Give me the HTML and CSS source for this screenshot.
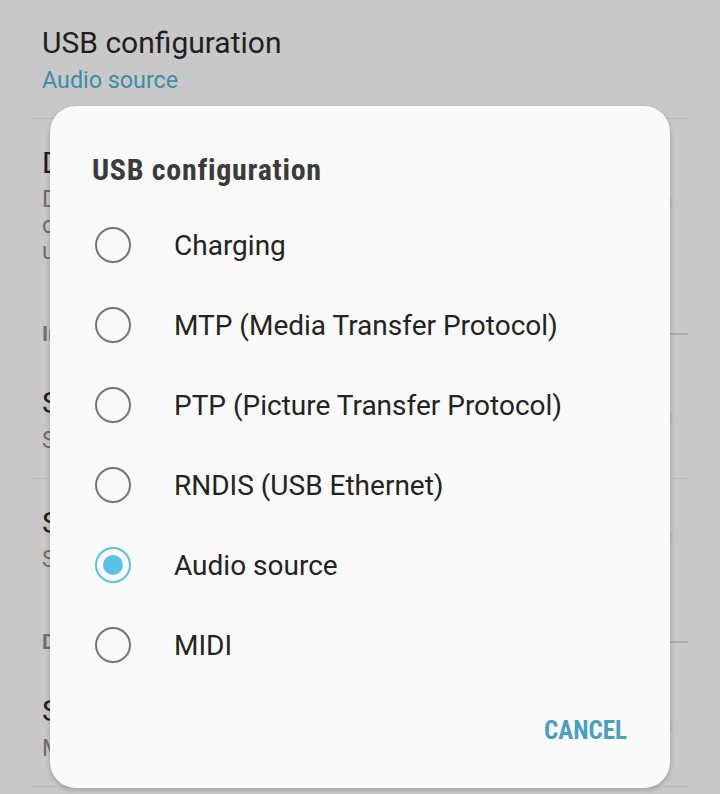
FILE: index.html
```html
<!DOCTYPE html>
<html lang="en">
<head>
    <meta charset="UTF-8">
    <meta name="viewport" content="width=device-width, initial-scale=1.0">
    <title>USB configuration</title>
    <link rel="stylesheet" href="styles.css">
</head>
<body>

    <!-- Settings list behind the dialog -->
    <div class="settings">
        <div class="item divided">
            <div class="item-text">
                <div class="item-title">USB configuration</div>
                <div class="item-summary accent">Audio source</div>
            </div>
        </div>

        <div class="item">
            <div class="item-text">
                <div class="item-title">Disable absolute volume</div>
                <div class="item-summary">Disables the Bluetooth absolute volume<br>can cause problems with remote devices<br>unacceptably loud volume or lack of control.</div>
            </div>
            <span class="switch"></span>
        </div>

        <div class="category">
            <span class="category-name">Input</span>
            <span class="category-line"></span>
        </div>

        <div class="item divided">
            <div class="item-text">
                <div class="item-title">Show taps</div>
                <div class="item-summary">Show visual feedback for taps.</div>
            </div>
            <span class="switch"></span>
        </div>

        <div class="item">
            <div class="item-text">
                <div class="item-title">Show pointer location</div>
                <div class="item-summary">Screen overlay showing current touch data.</div>
            </div>
            <span class="switch"></span>
        </div>

        <div class="category">
            <span class="category-name">Drawing</span>
            <span class="category-line"></span>
        </div>

        <div class="item divided">
            <div class="item-text">
                <div class="item-title">Show surface updates</div>
                <div class="item-summary">Make whole window surfaces flash.</div>
            </div>
            <span class="switch"></span>
        </div>
    </div>

    <!-- USB configuration dialog -->
    <div class="dialog">
        <h2 class="dialog-title">USB configuration</h2>

        <div class="options">
            <label class="option"><span class="radio"></span>Charging</label>
            <label class="option"><span class="radio"></span>MTP (Media Transfer Protocol)</label>
            <label class="option"><span class="radio"></span>PTP (Picture Transfer Protocol)</label>
            <label class="option"><span class="radio"></span>RNDIS (USB Ethernet)</label>
            <label class="option"><span class="radio checked"></span>Audio source</label>
            <label class="option"><span class="radio"></span>MIDI</label>
        </div>

        <div class="dialog-actions">
            <button type="button" class="text-button">CANCEL</button>
        </div>
    </div>

</body>
</html>
```

FILE: styles.css
```css
body {
    margin: 0;
    background: #c8c8c8;
    font-family: Roboto, "Noto Sans", sans-serif;
    overflow: hidden;
    height: 794px;
}

/* Dimmed settings list */
.settings {
    margin: -1px 32px 0 31px;
}

.item {
    display: flex;
    align-items: center;
    padding: 25px 15px 25px 11px;
}

.item.divided {
    border-bottom: 1px solid #b9b9b9;
}

.item-text {
    flex: 1;
    white-space: nowrap;
    overflow: hidden;
}

.item-title {
    font-size: 30px;
    line-height: 38px;
    color: #1f1f1f;
}

.item-summary {
    margin-top: 4.5px;
    font-size: 23.3px;
    line-height: 26px;
    color: #6e6e6e;
}

.item-summary.accent {
    color: #3d8ca6;
}

.switch {
    width: 44px;
    height: 17px;
    border-radius: 9px;
    background: #bcbcbc;
    flex-shrink: 0;
}

.category {
    display: flex;
    align-items: center;
    height: 70px;
    padding: 34px 0 14px 11px;
    box-sizing: border-box;
}

.category-name {
    font-size: 21px;
    line-height: 22px;
    font-weight: bold;
    color: #6f6f6f;
}

.category-line {
    flex: 1;
    height: 2px;
    margin-left: 12px;
    background: #ababab;
}

/* Dialog */
.dialog {
    position: absolute;
    left: 50px;
    top: 106px;
    width: 620px;
    box-sizing: border-box;
    padding: 46px 43px 41px 45px;
    background: #fafafa;
    border-radius: 26px;
    box-shadow: 0 2px 5px rgba(0, 0, 0, 0.22);
}

.dialog-title {
    margin: 0 0 17px -3px;
    font-size: 30px;
    line-height: 36px;
    font-weight: bold;
    font-stretch: condensed;
    letter-spacing: 0.7px;
    color: #3b3b3b;
}

.option {
    display: flex;
    align-items: center;
    height: 80px;
    font-size: 28px;
    color: #232323;
}

.radio {
    width: 36px;
    height: 36px;
    box-sizing: border-box;
    border: 2.5px solid #767676;
    border-radius: 50%;
    margin-right: 43px;
    flex-shrink: 0;
    display: flex;
    align-items: center;
    justify-content: center;
}

.radio.checked {
    border-color: #5ac2e7;
}

.radio.checked::after {
    content: "";
    width: 20px;
    height: 20px;
    border-radius: 50%;
    background: #5ac2e7;
}

.dialog-actions {
    display: flex;
    justify-content: flex-end;
    margin-top: 30px;
}

.text-button {
    padding: 0;
    border: none;
    background: none;
    font-family: Roboto, sans-serif;
    font-size: 25px;
    line-height: 32px;
    font-weight: bold;
    font-stretch: condensed;
    color: #4a9fc1;
    cursor: pointer;
}
```
